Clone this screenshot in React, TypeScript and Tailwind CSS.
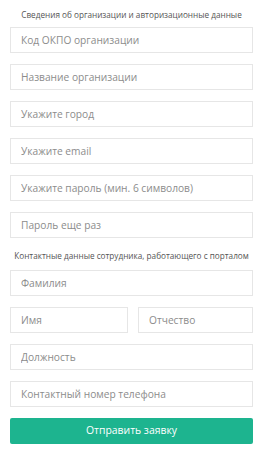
import { useState } from "react";

const font = { fontFamily: '"Open Sans", "Noto Sans", sans-serif' };

function Field({ placeholder, className = "" }: { placeholder: string; className?: string }) {
  const [value, setValue] = useState("");
  return (
    <input
      type="text"
      value={value}
      onChange={(e) => setValue(e.target.value)}
      placeholder={placeholder}
      className={
        "h-[26px] border border-[#e6e6e6] bg-white px-[10px] text-[10.2px] text-[#333] outline-none placeholder:text-[#8c8c8c] " +
        className
      }
    />
  );
}

export default function App() {
  return (
    <div className="w-[263px] bg-white px-[10px] pt-[8px] pb-[8px]" style={font}>
      <p className="mb-[5px] text-center text-[8.2px] leading-[14px] whitespace-nowrap text-[#555]">
        Сведения об организации и авторизационные данные
      </p>
      <div className="flex flex-col gap-[11px]">
        <Field placeholder="Код ОКПО организации" />
        <Field placeholder="Название организации" />
        <Field placeholder="Укажите город" />
        <Field placeholder="Укажите email" />
        <Field placeholder="Укажите пароль (мин. 6 символов)" />
        <Field placeholder="Пароль еще раз" />
      </div>

      <p className="mt-[11px] mb-[7px] text-center text-[8.2px] leading-[14px] whitespace-nowrap text-[#555]">
        Контактные данные сотрудника, работающего с порталом
      </p>
      <div className="flex flex-col gap-[11px]">
        <Field placeholder="Фамилия" />
        <div className="flex gap-[10px]">
          <Field placeholder="Имя" className="w-[118px]" />
          <Field placeholder="Отчество" className="min-w-0 flex-1" />
        </div>
        <Field placeholder="Должность" />
        <Field placeholder="Контактный номер телефона" />
        <button className="h-[26px] rounded-[2px] bg-[#1db48f] text-[10.4px] text-white">
          Отправить заявку
        </button>
      </div>
    </div>
  );
}
